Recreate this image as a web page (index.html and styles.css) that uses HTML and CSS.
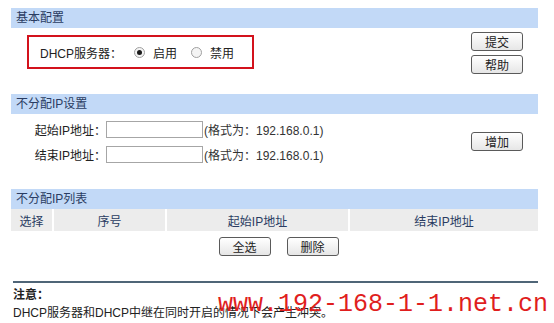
FILE: index.html
```html
<!DOCTYPE html>
<html lang="zh-CN">
<head>
    <meta charset="UTF-8">
    <title>DHCP服务器</title>
    <link rel="stylesheet" href="styles.css">
</head>
<body>
    <div class="page">
        <div class="section">
            <div class="section-title">基本配置</div>
            <div class="section-body basic">
                <div class="server-box">
                    <span class="server-label">DHCP服务器：</span>
                    <span class="radio checked"></span><span class="radio-text">启用</span>
                    <span class="radio"></span><span class="radio-text">禁用</span>
                </div>
                <div class="btn-col">
                    <button class="btn">提交</button>
                    <button class="btn">帮助</button>
                </div>
            </div>
        </div>

        <div class="section">
            <div class="section-title">不分配IP设置</div>
            <div class="section-body reserve">
                <div class="form-rows">
                    <div class="form-row">
                        <label class="form-label">起始IP地址：</label>
                        <input class="text-input" type="text">
                        <span class="hint">(格式为：192.168.0.1)</span>
                    </div>
                    <div class="form-row">
                        <label class="form-label">结束IP地址：</label>
                        <input class="text-input" type="text">
                        <span class="hint">(格式为：192.168.0.1)</span>
                    </div>
                </div>
                <div class="btn-col add-col">
                    <button class="btn">增加</button>
                </div>
            </div>
        </div>

        <div class="section">
            <div class="section-title">不分配IP列表</div>
            <table class="ip-table">
                <tr>
                    <th class="col-select">选择</th>
                    <th class="col-num">序号</th>
                    <th class="col-start">起始IP地址</th>
                    <th class="col-end">结束IP地址</th>
                </tr>
            </table>
            <div class="table-actions">
                <button class="btn">全选</button>
                <button class="btn">删除</button>
            </div>
        </div>

        <div class="note">
            <div class="note-title">注意：</div>
            <div class="note-text">DHCP服务器和DHCP中继在同时开启的情况下会产生冲突。</div>
        </div>
    </div>
    <div class="watermark">www.192-168-1-1.net.cn</div>
</body>
</html>
```

FILE: styles.css
```css
body {
    margin: 0;
    background: #fff;
    font-family: "Liberation Sans", "Noto Sans CJK SC", sans-serif;
    font-size: 12px;
    color: #222;
}
.page {
    width: 527px;
    margin-left: 11px;
    padding-top: 8px;
}
.section-title {
    height: 20px;
    line-height: 20px;
    padding-left: 5px;
    background: #c2d9f7;
    color: #2a3c62;
}
.section-body {
    display: flex;
    justify-content: space-between;
}
.basic {
    height: 66px;
}
.server-box {
    margin: 7px 0 0 16px;
    width: 212px;
    height: 30px;
    border: 2px solid #d3121c;
    display: flex;
    align-items: center;
    padding-left: 11px;
}
.server-label {
    width: 94px;
}
.radio {
    width: 9px;
    height: 9px;
    border: 1px solid #a0a0a0;
    border-radius: 50%;
    background: #f4f4f4;
    position: relative;
    margin-right: 8px;
}
.radio.checked::after {
    content: "";
    position: absolute;
    left: 2px;
    top: 2px;
    width: 5px;
    height: 5px;
    border-radius: 50%;
    background: #1a1a1a;
}
.radio-text {
    margin-right: 14px;
}
.btn-col {
    display: flex;
    flex-direction: column;
    gap: 4px;
    padding-top: 4px;
    margin-right: 15px;
}
.btn {
    width: 52px;
    height: 19px;
    padding: 0;
    font-family: inherit;
    font-size: 12px;
    color: #222;
    border: 1px solid #5a5a5a;
    border-radius: 3px;
    background: linear-gradient(#ffffff, #e6e6e6);
}
.reserve {
    height: 75px;
}
.form-rows {
    display: flex;
    flex-direction: column;
    gap: 8px;
    padding-top: 7px;
}
.form-row {
    display: flex;
    align-items: center;
}
.form-label {
    width: 95px;
    text-align: right;
}
.text-input {
    width: 97px;
    height: 17px;
    box-sizing: border-box;
    border: 1px solid #a6a6a6;
    margin: 0 1px 0 0;
}
.hint {
    color: #333;
}
.add-col {
    padding-top: 18px;
}
.ip-table {
    width: 100%;
    border-collapse: collapse;
}
.ip-table th {
    height: 22px;
    padding: 0;
    background: #ececec;
    font-weight: normal;
    color: #2a3c62;
    border-left: 2px solid #fff;
}
.ip-table th:first-child {
    border-left: none;
}
.col-select { width: 41px; }
.col-num { width: 111px; }
.col-start { width: 181px; }
.table-actions {
    display: flex;
    justify-content: center;
    gap: 16px;
    padding: 6px 0 0 8px;
}
.note {
    margin-top: 25px;
    margin-left: 2px;
    border-top: 2px solid #4f6577;
    padding-top: 5px;
}
.note-title {
    font-weight: bold;
    line-height: 14px;
}
.note-text {
    margin-top: 4px;
    line-height: 14px;
}
.watermark {
    position: absolute;
    left: 218px;
    top: 290px;
    font-family: "Liberation Mono", monospace;
    font-size: 25px;
    color: #e01e1e;
    line-height: 30px;
}
```
